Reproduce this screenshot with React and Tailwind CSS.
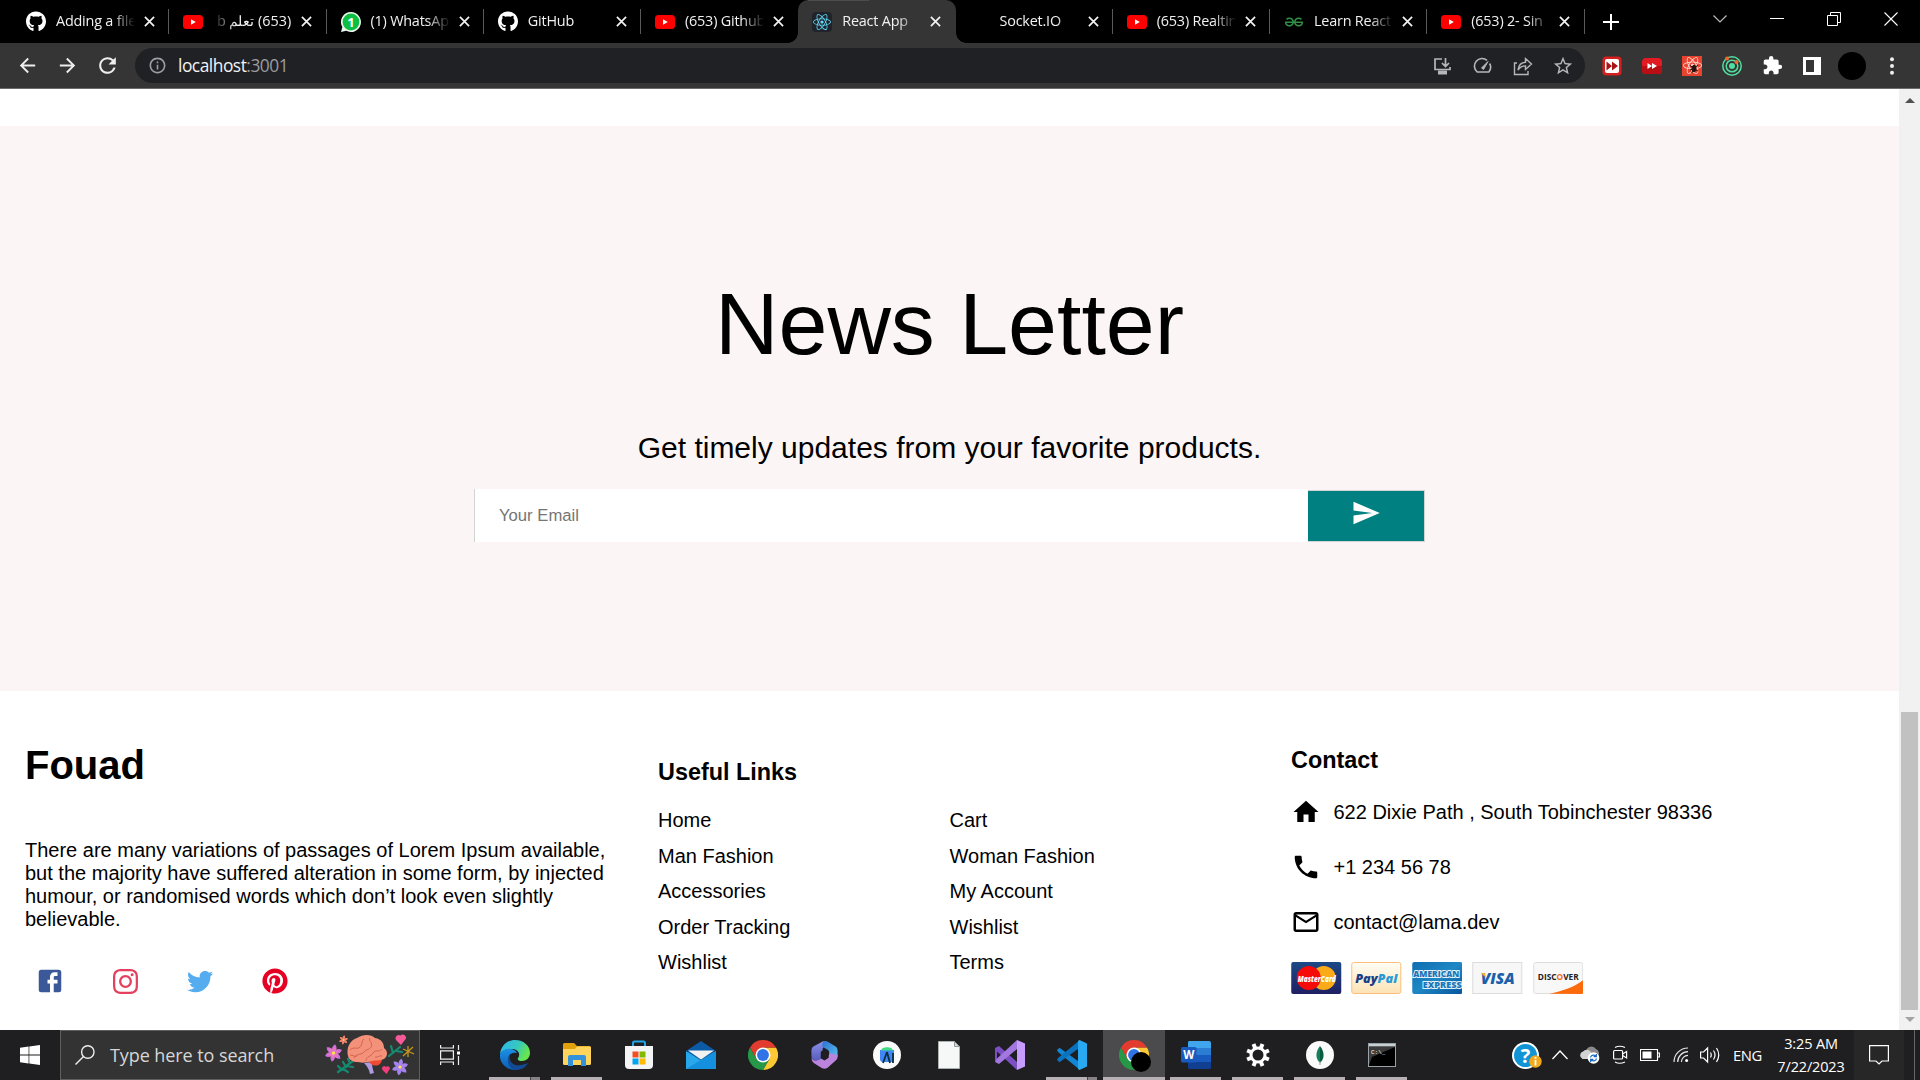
import { FaGithub, FaPinterest, FaReact } from "react-icons/fa";
import {
  MdArrowBack,
  MdArrowForward,
  MdExtension,
  MdHome,
  MdInfoOutline,
  MdMailOutline,
  MdPhone,
  MdRefresh,
  MdSend,
  MdStarBorder,
} from "react-icons/md";
import { SiGeeksforgeeks, SiInstagram } from "react-icons/si";

/* ---------- Browser tabs ---------- */

function YouTubeIcon() {
  return (
    <svg viewBox="0 0 20 20" className="size-5">
      <rect x="0" y="3" width="20" height="14" rx="3.5" fill="#f00" />
      <path d="M8 7.2v5.6l4.8-2.8z" fill="#fff" />
    </svg>
  );
}

function WhatsAppIcon() {
  return (
    <svg viewBox="0 0 20 20" className="size-5">
      <path d="M10 0a10 10 0 1 1-4.8 18.8L0 20l1.4-4.9A10 10 0 0 1 10 0z" fill="#e9f7ec" />
      <circle cx="10" cy="10" r="8.4" fill="#0cbf43" />
      <text x="10" y="14.8" textAnchor="middle" fontSize="13" fontWeight="700" fill="#fff" fontFamily="Open Sans">
        1
      </text>
    </svg>
  );
}

function ReactIcon() {
  return (
    <div className="flex size-5 items-center justify-center rounded-sm bg-[#20232a]">
      <FaReact className="size-[18px] text-[#61dafb]" />
    </div>
  );
}

const github = <FaGithub className="size-[21px] text-white" />;

const tabs = [
  { icon: github, title: "Adding a file" },
  { icon: <YouTubeIcon />, title: "(653) تعلم b", rtl: true },
  { icon: <WhatsAppIcon />, title: "(1) WhatsAp" },
  { icon: github, title: "GitHub" },
  { icon: <YouTubeIcon />, title: "(653) Github", noSep: true },
  { icon: <ReactIcon />, title: "React App", active: true },
  { icon: null, title: "Socket.IO" },
  { icon: <YouTubeIcon />, title: "(653) Realtin" },
  { icon: <SiGeeksforgeeks className="size-[18px] text-[#2f8d46]" />, title: "Learn React" },
  { icon: <YouTubeIcon />, title: "(653) 2- Sin" },
];

function Tab({ icon, title, active, rtl, noSep }) {
  return (
    <div
      className={
        "relative flex h-[43px] w-[157.25px] shrink-0 items-center pl-[14px] " +
        (active ? "rounded-t-[10px] bg-[#353535]" : "")
      }
    >
      {active && (
        <>
          <span className="absolute bottom-0 -left-[10px] size-[10px] bg-[radial-gradient(circle_at_0_0,#000_9.5px,#353535_10px)]" />
          <span className="absolute -right-[10px] bottom-0 size-[10px] bg-[radial-gradient(circle_at_100%_0,#000_9.5px,#353535_10px)]" />
          <span className="absolute top-0 left-[10px] h-px w-[61px] bg-[#4c4c4c]" />
        </>
      )}
      <span className="flex size-5 items-center justify-center">{icon}</span>
      <span
        dir={rtl ? "rtl" : "ltr"}
        className={
          "mb-[2px] ml-[10px] w-[78px] overflow-hidden text-[14.4px] leading-6 tracking-[-0.2px] whitespace-nowrap text-[#f1f1f1] " +
          (rtl
            ? "[mask-image:linear-gradient(to_left,#000_70%,transparent)]"
            : "[mask-image:linear-gradient(to_right,#000_72%,transparent_102%)]")
        }
      >
        {title}
      </span>
      <svg viewBox="0 0 12 12" className="ml-[10px] size-[11px]" stroke="#f1f1f1" strokeWidth="1.9">
        <path d="M1 1l10 10M11 1L1 11" />
      </svg>
      {!active && !noSep && <span className="absolute right-0 h-[25px] w-px bg-[#5a5a5a]" />}
    </div>
  );
}

function TabStrip() {
  return (
    <div className="flex h-[43px] items-center bg-black pl-[12px]">
      {tabs.map((t, i) => (
        <Tab key={i} {...t} />
      ))}
      <svg viewBox="0 0 16 16" className="ml-[18.5px] size-4" stroke="#fff" strokeWidth="2">
        <path d="M8 0v16M0 8h16" />
      </svg>
      <div className="ml-auto flex h-full items-start pt-3 text-white">
        <svg viewBox="0 0 14 14" className="mr-[43px] size-[14px]" fill="none" stroke="#bbb" strokeWidth="1.2">
          <path d="M.5 3.5L7 10l6.5-6.5" />
        </svg>
        <svg viewBox="0 0 14 14" className="mr-[43px] size-[14px]" fill="none" stroke="#fff" strokeWidth="1">
          <path d="M0 6.5h14" />
        </svg>
        <svg viewBox="0 0 14 14" className="mr-[43px] size-[14px]" fill="none" stroke="#fff" strokeWidth="1">
          <path d="M.5 3.5h10v10H.5zM3.5 3.5v-3h10v10h-3" />
        </svg>
        <svg viewBox="0 0 14 14" className="mr-[22px] size-[14px]" fill="none" stroke="#fff" strokeWidth="1.1">
          <path d="M.5.5l13 13M13.5.5l-13 13" />
        </svg>
      </div>
    </div>
  );
}

/* ---------- Browser toolbar ---------- */

function Slot({ children }) {
  return <span className="flex w-10 shrink-0 items-center justify-center">{children}</span>;
}

function Toolbar() {
  return (
    <div className="flex h-[46px] items-center border-b border-[#6b6b6b] bg-[#353535] pl-[7px]">
      <Slot>
        <MdArrowBack className="size-[23px] text-[#eee]" />
      </Slot>
      <Slot>
        <MdArrowForward className="size-[23px] text-[#eee]" />
      </Slot>
      <Slot>
        <MdRefresh className="size-[25px] text-[#eee]" />
      </Slot>
      <div className="ml-2 flex h-[35px] w-[1450px] items-center rounded-full bg-[#202124] pl-[13px]">
        <MdInfoOutline className="size-[19px] text-[#9aa0a6]" />
        <span className="ml-[11px] text-[17.4px] tracking-[-0.5px] text-[#9a9ca0]">
          <span className="text-[#f1f3f4]">localhost</span>:3001
        </span>
        <div className="ml-auto flex pr-[2px] text-[#b5b7ba]">
          <Slot>
            <svg viewBox="0 0 20 20" className="size-5" fill="none" stroke="currentColor" strokeWidth="1.7">
              <path d="M9 3H2v10.500h15V11M12.500 2v8M9 7l3.500 3.500L16 7" />
              <path d="M5 16.500h9" strokeWidth="4" />
            </svg>
          </Slot>
          <Slot>
            <svg viewBox="0 0 20 20" className="size-5" fill="none" stroke="currentColor" strokeWidth="1.6">
              <path d="M14 4.300A7.500 7.500 0 0 0 4.200 16h11.600a7.500 7.500 0 0 0 .800-8.500" />
              <path d="M8.500 12L15 5.500l-4.500 8z" fill="currentColor" strokeWidth="1" />
            </svg>
          </Slot>
          <Slot>
            <svg viewBox="0 0 20 20" className="size-5" fill="none" stroke="currentColor" strokeWidth="1.4">
              <path d="M4 7H1.500v11.500h13.500V15" />
              <path d="M5 14c.500-4.500 3-7.500 7.500-7.800V2.500L18.500 8l-6 5.500v-3.600C9.500 9.900 7 11 5 14z" />
            </svg>
          </Slot>
          <Slot>
            <MdStarBorder className="size-[22px]" />
          </Slot>
        </div>
      </div>
      <div className="ml-[7px] flex items-center">
        <Slot>
          <svg viewBox="0 0 20 20" className="size-5">
            <rect x=".5" y=".5" width="19" height="19" rx="3.500" fill="#d5201f" />
            <rect x="3" y="3" width="14" height="14" rx="2" fill="#fff" />
            <path d="M4.500 5.500L10 10l-5.500 4.500zM10 5.500l6 4.500-6 4.500z" fill="#a91515" />
          </svg>
        </Slot>
        <Slot>
          <svg viewBox="0 0 20 20" className="size-5">
            <rect x="0" y="2" width="20" height="16" rx="4" fill="#e21b22" />
            <path d="M0 10h20v4a4 4 0 0 1-4 4H4a4 4 0 0 1-4-4z" fill="#b90e14" />
            <path d="M5.500 7l4.500 3-4.500 3zM10 7l5 3-5 3z" fill="#fff" />
          </svg>
        </Slot>
        <Slot>
          <span className="relative flex size-5 items-center justify-center bg-[#e8432f]">
            <FaReact className="size-[19px] text-[#ffd9d2]" />
            <svg viewBox="0 0 20 20" className="absolute inset-0 size-5" stroke="#241512" strokeWidth="1">
              <ellipse cx="12" cy="12.500" rx="2" ry="3.200" fill="#241512" />
              <path d="M8 9.500l3 2M16 9l-3 2.500M8 14l3-1M16 15l-3-1.500M9.500 17l1.500-2" />
            </svg>
          </span>
        </Slot>
        <Slot>
          <svg viewBox="0 0 20 20" className="size-5" fill="none" stroke="#4fe0a0" strokeWidth="1.500">
            <circle cx="10" cy="10" r="9.200" />
            <circle cx="10" cy="10" r="5.800" />
            <circle cx="10" cy="10" r="3" fill="#4fe0a0" stroke="none" />
            <circle cx="5" cy="2.500" r="2" fill="#f2662b" stroke="none" />
            <circle cx="14.500" cy="6" r="2" fill="#f2662b" stroke="none" />
          </svg>
        </Slot>
        <Slot>
          <MdExtension className="size-[21px] text-white" />
        </Slot>
        <Slot>
          <svg viewBox="0 0 18 18" className="size-[18px]">
            <path d="M0 0h18v18H0zM3 3v12h8V3z" fill="#fff" fillRule="evenodd" />
          </svg>
        </Slot>
        <Slot>
          <span className="size-7 rounded-full bg-black" />
        </Slot>
        <Slot>
          <svg viewBox="0 0 4 18" className="h-[18px] w-1" fill="#eee">
            <circle cx="2" cy="2.300" r="2" />
            <circle cx="2" cy="9" r="2" />
            <circle cx="2" cy="15.700" r="2" />
          </svg>
        </Slot>
      </div>
    </div>
  );
}

/* ---------- Web page ---------- */

function Newsletter() {
  return (
    <section className="flex h-[565px] flex-col items-center bg-[#fcf5f5] pt-[148px]">
      <h1 className="h-[100px] text-[87.9px] leading-[100px]">News Letter</h1>
      <p className="mt-[57px] text-[30px] leading-[34px]">Get timely updates from your favorite products.</p>
      <div className="mt-[24px] flex h-[53px] w-[951px] border-l border-[#d3d3d3]">
        <div className="flex flex-1 items-center bg-white pl-6 text-[16.67px] text-[#757575]">Your Email</div>
        <div className="mt-px flex w-[117px] justify-center border-t border-r border-b border-[#d3d3d3] bg-[#008080] pt-[7px]">
          <MdSend className="size-[30px] text-white" />
        </div>
      </div>
    </section>
  );
}

function Facebook() {
  return (
    <svg viewBox="0 0 24 24" className="size-[30px]" fill="#3b5999">
      <path d="M5 3h14a2 2 0 0 1 2 2v14a2 2 0 0 1-2 2H5a2 2 0 0 1-2-2V5a2 2 0 0 1 2-2m13 2h-2.500A3.500 3.500 0 0 0 12 8.500V11h-2v3h2v7h3v-7h3v-3h-3V9a1 1 0 0 1 1-1h2V5z" />
    </svg>
  );
}

function Twitter() {
  return (
    <svg viewBox="0 0 24 24" className="size-[30px]" fill="#55acee">
      <path d="M22.46 6c-.77.35-1.600.58-2.460.69.88-.53 1.560-1.370 1.880-2.380-.83.5-1.750.85-2.720 1.050C18.370 4.500 17.260 4 16 4c-2.350 0-4.270 1.920-4.270 4.290 0 .34.04.67.11.98C8.280 9.090 5.110 7.380 3 4.790c-.37.63-.58 1.370-.58 2.150 0 1.490.75 2.810 1.910 3.560-.71 0-1.370-.2-1.950-.5v.03c0 2.080 1.480 3.820 3.440 4.210a4.220 4.220 0 0 1-1.930.07 4.280 4.280 0 0 0 4 2.980 8.521 8.521 0 0 1-5.330 1.840c-.34 0-.68-.02-1.020-.06C3.440 20.290 5.700 21 8.120 21 16 21 20.330 14.460 20.330 8.790c0-.19 0-.37-.01-.56.84-.6 1.560-1.360 2.140-2.230z" />
    </svg>
  );
}

const linkRows = [
  ["Home", "Cart"],
  ["Man Fashion", "Woman Fashion"],
  ["Accessories", "My Account"],
  ["Order Tracking", "Wishlist"],
  ["Wishlist", "Terms"],
];

function Cards() {
  const card = "h-8 w-[50.5px]";
  return (
    <div className="mt-[25px] flex gap-[9.9px] font-['Open_Sans']">
      <svg viewBox="0 0 50 32" className={card}>
        <defs>
          <linearGradient id="mc" x1="0" y1="0" x2="0" y2="1">
            <stop offset="0" stopColor="#1b4a86" />
            <stop offset="1" stopColor="#1f2062" />
          </linearGradient>
        </defs>
        <rect width="50" height="32" rx="2" fill="url(#mc)" />
        <circle cx="32.500" cy="16" r="12" fill="#fbab18" />
        <circle cx="17.500" cy="16" r="12" fill="#f60b0b" />
        <text x="25.500" y="19.800" textAnchor="middle" textLength="38" lengthAdjust="spacingAndGlyphs" fontSize="9.500" fontWeight="800" fontStyle="italic" fill="#fff">
          MasterCard
        </text>
      </svg>
      <svg viewBox="0 0 50 32" className={card}>
        <defs>
          <linearGradient id="pp" x1="0" y1="0" x2="0" y2="1">
            <stop offset="0" stopColor="#fffdf6" />
            <stop offset="1" stopColor="#fde3b4" />
          </linearGradient>
        </defs>
        <rect x=".5" y=".5" width="49" height="31" rx="2" fill="url(#pp)" stroke="#fbbf7b" />
        <text x="25" y="20.500" textAnchor="middle" textLength="42" lengthAdjust="spacingAndGlyphs" fontSize="12.500" fontWeight="800" fontStyle="italic" fill="#183f87">
          Pay<tspan fill="#2a9ad6">Pal</tspan>
        </text>
      </svg>
      <svg viewBox="0 0 50 32" className={card}>
        <defs>
          <linearGradient id="ae" x1="0" y1="0" x2="1" y2="1">
            <stop offset="0" stopColor="#0d6db0" />
            <stop offset=".5" stopColor="#1f87c4" />
            <stop offset="1" stopColor="#07559b" />
          </linearGradient>
        </defs>
        <rect width="50" height="32" rx="2" fill="url(#ae)" />
        <g fontSize="9.500" fontWeight="800" fill="#1b74b4" stroke="#e4f2fb" strokeWidth="2" paintOrder="stroke">
          <text x="1" y="15.300" textLength="46" lengthAdjust="spacingAndGlyphs">AMERICAN</text>
          <text x="10.500" y="25.800" textLength="39" lengthAdjust="spacingAndGlyphs">EXPRESS</text>
        </g>
      </svg>
      <svg viewBox="0 0 50 32" className={card}>
        <rect x=".5" y=".5" width="49" height="31" fill="#f7f7f8" stroke="#dcdcde" />
        <text x="25.500" y="22" textAnchor="middle" textLength="34" lengthAdjust="spacingAndGlyphs" fontSize="15" fontWeight="800" fontStyle="italic" fill="#1c5fa9">
          VISA
        </text>
        <path d="M8.500 11h4l1 4.500z" fill="#f5b120" />
      </svg>
      <svg viewBox="0 0 50 32" className={card}>
        <rect x=".5" y=".5" width="49" height="31" rx="2" fill="#f8f8f8" stroke="#dedede" />
        <path d="M16 31.800C29 29 42 24.500 50 18v12a2 2 0 0 1-2 2z" fill="#fb6a0c" />
        <text x="25" y="17.500" textAnchor="middle" textLength="41" lengthAdjust="spacingAndGlyphs" fontSize="9" fontWeight="700" fill="#222">
          DISC<tspan fill="#f76a10">O</tspan>VER
        </text>
      </svg>
    </div>
  );
}

function Footer() {
  return (
    <footer className="flex h-[339px] bg-white text-[20px] leading-[23px]">
      <div className="w-[633px] px-[25px] pt-[51px]">
        <h1 className="text-[40px] leading-[46px] font-bold">Fouad</h1>
        <p className="mt-[51px] w-[583px]">
          There are many variations of passages of Lorem Ipsum available, but the majority have suffered alteration in
          some form, by injected humour, or randomised words which don’t look even slightly believable.
        </p>
        <div className="mt-[25px] flex gap-[25px]">
          <span className="flex size-[50px] items-center justify-center">
            <Facebook />
          </span>
          <span className="flex size-[50px] items-center justify-center">
            <SiInstagram className="size-[25px] text-[#e4405f]" />
          </span>
          <span className="flex size-[50px] items-center justify-center">
            <Twitter />
          </span>
          <span className="flex size-[50px] items-center justify-center">
            <FaPinterest className="size-[26px] text-[#e60023]" />
          </span>
        </div>
      </div>
      <div className="w-[633px] px-[25px] pt-[68px]">
        <h3 className="text-[23.4px] leading-[27px] font-bold">Useful Links</h3>
        <div className="mt-[23px] grid grid-cols-[291.5px_1fr] gap-y-[12.5px]">
          {linkRows.flat().map((l, i) => (
            <span key={i}>{l}</span>
          ))}
        </div>
      </div>
      <div className="flex-1 px-[25px] pt-[56px]">
        <h3 className="text-[23.4px] leading-[27px] font-bold">Contact</h3>
        <div className="mt-[23px] flex flex-col gap-[25px]">
          <div className="flex h-[30px] items-center gap-[12.5px]">
            <MdHome className="size-[30px]" />
            622 Dixie Path , South Tobinchester 98336
          </div>
          <div className="flex h-[30px] items-center gap-[12.5px]">
            <MdPhone className="size-[30px]" />
            +1 234 56 78
          </div>
          <div className="flex h-[30px] items-center gap-[12.5px]">
            <MdMailOutline className="size-[30px]" />
            contact@lama.dev
          </div>
        </div>
        <Cards />
      </div>
    </footer>
  );
}

function Scrollbar() {
  return (
    <div className="flex w-[21px] flex-col items-center bg-[#f1f1f1]">
      <svg viewBox="0 0 10 5" className="mt-[9px] h-[5px] w-[10px]">
        <path d="M0 5l5-5 5 5z" fill="#505050" />
      </svg>
      <div className="mt-[609px] h-[298px] w-[17px] bg-[#c1c1c1]" />
      <svg viewBox="0 0 10 5" className="mt-[7px] h-[5px] w-[10px]">
        <path d="M0 0l5 5 5-5z" fill="#a3a3a3" />
      </svg>
    </div>
  );
}

/* ---------- Taskbar icons ---------- */

function Flower({ x, y, s, petal, core }) {
  return (
    <g transform={`translate(${x} ${y}) scale(${s})`}>
      {[0, 60, 120, 180, 240, 300].map((a) => (
        <path key={a} d="M0-10.500C3-8 3.400-5 1.500-1h-3C-3.400-5-3-8 0-10.500z" fill={petal} transform={`rotate(${a + 10})`} />
      ))}
      <circle r="3" fill={petal} />
      <circle r="2" fill={core} />
    </g>
  );
}

function Brain() {
  return (
    <svg viewBox="0 0 92 42" className="h-[42px] w-[92px]">
      <defs>
        <linearGradient id="petals" x1="0" y1="0" x2="0" y2="1">
          <stop offset="0" stopColor="#c46be8" />
          <stop offset="1" stopColor="#f27bb4" />
        </linearGradient>
      </defs>
      <Flower x={8.5} y={19} s={0.85} petal="url(#petals)" core="#ffe34d" />
      <Flower x={18.5} y={6} s={0.45} petal="#f4846a" core="#ffd34d" />
      <Flower x={75} y={33} s={0.8} petal="#a583ee" core="#ffe34d" />
      <path d="M13 38l15-11M17 36l-4-4M21 33l-3-5M25 29l-2-4M18 35l5 3M22 32l6 1" stroke="#158a70" strokeWidth="2.200" strokeLinecap="round" />
      <path d="M64 22l11-9M68 19l-2-7M71 17l6 1" stroke="#158a70" strokeWidth="2.200" strokeLinecap="round" />
      <path d="M83 12v11M78 15l11 5M88 13l-10 9" stroke="#c8961e" strokeWidth="1.300" />
      <path d="M76 11l-5-5a3.300 3.300 0 0 1 4.500-4.500 3.300 3.300 0 0 1 5.500 3z" fill="#f65a9a" />
      <path d="M61.500 40l-4-4a2.200 2.200 0 0 1 3.500-3 2.200 2.200 0 0 1 3.800 2z" fill="#f0407c" />
      <path d="M39 29l8-1c0 5 1 8 2 11l-4 1c-1-5-3-8-6-11z" fill="#b09be0" />
      <path d="M44 28c5 6 12 4 13-2l-5-3z" fill="#f04a30" />
      <path d="M23 22c-2-8 2-16 9-18 6-4 14-4 18 0 7 1 9 6 9 10 4 3 4 8 0 11-4 2-9 1-12 2-6 2-12 2-14 1-5 0-9-2-10-6z" fill="#f3917a" />
      <path d="M25 16c4-4 7 0 10-3s1-6 4-8M29 24c3-5 8-3 10-6s7-2 8-7M41 27c0-5 5-4 7-8s6 0 9-4M45 4c-2 3 3 4 1 7M25 21c3 0 4 2 7 1M50 23c3 1 4-2 7-1" fill="none" stroke="#d0604a" strokeWidth=".9" />
    </svg>
  );
}

function Edge() {
  return (
    <svg viewBox="0 0 30 30" className="size-[30px]">
      <defs>
        <linearGradient id="eg1" x1="0" y1="0" x2="1" y2=".4">
          <stop offset="0" stopColor="#2db4ee" />
          <stop offset=".6" stopColor="#36c8c0" />
          <stop offset="1" stopColor="#66e64e" />
        </linearGradient>
        <linearGradient id="eg2" x1="0" y1="0" x2="0" y2="1">
          <stop offset="0" stopColor="#1b92e6" />
          <stop offset="1" stopColor="#0b5cb4" />
        </linearGradient>
      </defs>
      <path d="M0 14C1 6 7 0 15 0c9 0 15 6 15 13 0 5-4 8-8 8-3 0-5-1-4-3 3-4 0-9-6-9C6 9 2 11 0 14z" fill="url(#eg1)" />
      <path d="M0 14c2-4 7-6 11-5 3 .5 5 2 6 4-7-1-10 4-8 9 2 5 6 7 8 8C8 31-1 24 0 14z" fill="url(#eg2)" />
      <path d="M11 13c-4 7 2 14 10 12 3-.5 5-1.500 7-2-3 5-7 7-12 7C8 29 5 18 11 13z" fill="#134a93" />
    </svg>
  );
}

function Explorer() {
  return (
    <svg viewBox="0 0 28 24" className="h-6 w-7">
      <path d="M0 1.500Q0 0 1.500 0H11l3 3h12.500Q28 3 28 4.500V10H0z" fill="#e2a10c" />
      <path d="M0 6h12l2-2.500h12.500q1.500 0 1.500 1.500v15.500q0 1.500-1.500 1.500h-25Q0 22 0 20.500z" fill="#ffd45c" />
      <path d="M5 23V14q0-2 2-2h14q2 0 2 2v9h-5v-6h-8v6z" fill="#3292dc" />
    </svg>
  );
}

function Store() {
  return (
    <svg viewBox="0 0 30 30" className="size-[30px]">
      <path d="M9 8V3q0-1.500 1.500-1.500h9Q21 1.500 21 3v5" fill="none" stroke="#1fa5e8" strokeWidth="2" />
      <path d="M1 6h28v19q0 4-4 4H5q-4 0-4-4z" fill="#f3f4f6" />
      <path d="M8.500 11.500h6v6h-6z" fill="#f25022" />
      <path d="M15.500 11.500h6v6h-6z" fill="#7fba00" />
      <path d="M8.500 18.500h6v6h-6z" fill="#00a4ef" />
      <path d="M15.500 18.500h6v6h-6z" fill="#ffb900" />
    </svg>
  );
}

function Mail() {
  return (
    <svg viewBox="0 0 30 28" className="h-7 w-[30px]">
      <path d="M0 10L15 0l15 10z" fill="#0c59a4" />
      <path d="M2 9h26v10H2z" fill="#0c59a4" />
      <path d="M0 10l15 9.500L30 10v18H0z" fill="#28a8ea" />
      <path d="M0 28L30 10v18z" fill="#1490df" />
      <path d="M2 9.500h26l-13 9z" fill="#f2f2f2" />
    </svg>
  );
}

function Chrome() {
  return (
    <svg viewBox="0 0 48 48" className="size-[30px]">
      <path d="M24 12h20.800A24 24 0 0 1 24 48l10.400-18z" fill="#fcc934" />
      <path d="M24 48A24 24 0 0 1 3.200 12l10.400 18L24 36l5 3.300z" fill="#279847" />
      <path d="M34.400 30L24 48 13.600 30z" fill="#279847" />
      <path d="M3.200 12A24 24 0 0 1 44.800 12H24L13.600 30z" fill="#e33b2e" />
      <circle cx="24" cy="24" r="12" fill="#fff" />
      <circle cx="24" cy="24" r="9.500" fill="#2f73e6" />
    </svg>
  );
}

function M365() {
  return (
    <svg viewBox="0 0 28 30" className="h-[28px] w-[27px]">
      <defs>
        <linearGradient id="m3" x1="0" y1="0" x2="0" y2="1">
          <stop offset="0" stopColor="#8b90e8" />
          <stop offset="1" stopColor="#4e55b5" />
        </linearGradient>
        <linearGradient id="m4" x1="0" y1="0" x2="1" y2="1">
          <stop offset="0" stopColor="#2b6fd0" />
          <stop offset="1" stopColor="#5cc8f2" />
        </linearGradient>
      </defs>
      <path d="M10 1.500C12 0 15 0 17 1l-5 7v9l-2 7-8-4Q0 19 0 16V10q0-3 2-4z" fill="url(#m3)" />
      <path d="M14 0q2 0 4 1.200l7.500 4.500Q28 7 28 10v7l-9 3V12q0-2-2-3l-5-2.500C11 4 12 1 14 0z" fill="url(#m4)" />
      <path d="M28 15v2q0 3-2 4l-9 8q-3 1.500-6 0L2.500 23.500Q0 22 0 18q2 4 6 3l11-4 3-4z" fill="#ba84dc" />
      <path d="M10 11.500L13.500 9l5 3v6L14 21l-4-2.500z" fill="#1f1e20" />
    </svg>
  );
}

function AndroidStudio() {
  return (
    <svg viewBox="0 0 28 28" className="size-7">
      <circle cx="14" cy="14" r="14" fill="#fafafa" />
      <path d="M7 9h14v9q0 3-3 3H10q-3 0-3-3z" fill="#4285f4" />
      <path d="M8 9.500C8.500 5 19.500 5 20 9.500z" fill="#3ddc84" />
      <path d="M14 11l-4 11M14 11l3 11M20 12v10" stroke="#073042" strokeWidth="1.800" />
    </svg>
  );
}

function FileIcon() {
  return (
    <svg viewBox="0 0 22 28" className="h-7 w-[22px]">
      <path d="M.5.500h16l5 5v22H.500z" fill="#f6f8f8" stroke="#aab2b0" />
      <path d="M16.500.500v5h5z" fill="#d5dad9" stroke="#8d9694" />
    </svg>
  );
}

function VisualStudio() {
  return (
    <svg viewBox="0 0 30 30" className="size-[30px]">
      <path d="M0 8l4-2 18 16v8L2 11.500v8L0 22z" fill="#7d4fc4" />
      <path d="M0 22l4 2L22 9V0L2 18.500z" fill="#a277e0" />
      <path d="M22 0l8 3.500v23L22 30z" fill="#c79bff" />
    </svg>
  );
}

function VSCode() {
  return (
    <svg viewBox="0 0 30 30" className="size-[30px]">
      <path d="M0 10l2.500-2.300L23 22.500V30L1 12z" fill="#1286d2" />
      <path d="M0 20l2.500 2.300L23 7.500V0L1 18z" fill="#0b73bd" />
      <path d="M22.500 0l7.500 3.500v23L22.500 30l-1.500-1V1z" fill="#29a9f2" />
    </svg>
  );
}

function Word() {
  return (
    <svg viewBox="0 0 30 28" className="h-7 w-[30px]">
      <path d="M8 0h20q2 0 2 1.500V7H7V1.500Q7 0 8 0z" fill="#41a5ee" />
      <path d="M7 7h23v7H7z" fill="#2b7cd3" />
      <path d="M7 14h23v7H7z" fill="#185abd" />
      <path d="M7 21h23v5.500q0 1.500-2 1.500H9q-2 0-2-1.500z" fill="#103f91" />
      <rect x="0" y="6" width="15.500" height="15.500" rx="1.500" fill="#185abd" />
      <text x="7.700" y="18" textAnchor="middle" fontSize="11.500" fontWeight="700" fill="#fff" fontFamily="Open Sans">
        W
      </text>
    </svg>
  );
}

function Gear() {
  return (
    <svg viewBox="-12 -12 24 24" className="size-6">
      {[0, 45, 90, 135, 180, 225, 270, 315].map((a) => (
        <rect key={a} x="-2" y="-11.800" width="4" height="5" fill="#fff" transform={`rotate(${a + 22.5})`} />
      ))}
      <circle r="7" fill="none" stroke="#fff" strokeWidth="3" />
    </svg>
  );
}

function Mongo() {
  return (
    <svg viewBox="0 0 28 28" className="size-7">
      <circle cx="14" cy="14" r="14" fill="#fafafa" />
      <path d="M14 5c5 6 4.500 13 0 17z" fill="#0a5b40" />
      <path d="M14 5C9 11 9.500 18 14 22z" fill="#12805a" />
      <path d="M14 20v4" stroke="#8ba69b" />
    </svg>
  );
}

function Cmd() {
  return (
    <svg viewBox="0 0 28 24" className="h-6 w-7">
      <rect x=".5" y=".5" width="27" height="23" fill="#000" stroke="#99a2a6" />
      <path d="M1 1h26v2.500H1z" fill="#c7cfd3" />
      <path d="M1 4h26L4 14l-3 8z" fill="#3b3b3b" />
      <text x="3" y="10.500" fontSize="6" fill="#fff" fontFamily="Liberation Mono">
        C:\_
      </text>
    </svg>
  );
}

const apps = [
  { icon: <Edge />, line: "split" },
  { icon: <Explorer />, line: "plain" },
  { icon: <Store /> },
  { icon: <Mail /> },
  { icon: <Chrome /> },
  { icon: <M365 /> },
  { icon: <AndroidStudio /> },
  { icon: <FileIcon /> },
  { icon: <VisualStudio /> },
  { icon: <VSCode />, line: "split" },
  { icon: <Chrome />, line: "active" },
  { icon: <Word />, line: "plain" },
  { icon: <Gear />, line: "plain" },
  { icon: <Mongo />, line: "plain" },
  { icon: <Cmd />, line: "plain" },
];

function AppButton({ icon, line }) {
  return (
    <div className={"relative flex h-full w-[61.95px] shrink-0 items-center justify-center " + (line === "active" ? "bg-[#4b4a4c]" : "")}>
      {icon}
      {line === "active" && (
        <>
          <span className="absolute top-[22px] left-[28px] size-5 rounded-full bg-black" />
          <span className="absolute inset-x-0 bottom-0 h-[3px] bg-[#b6b0b4]" />
        </>
      )}
      {line === "plain" && <span className="absolute bottom-0 left-[5px] h-[3px] w-[51px] bg-[#b6b0b4]" />}
      {line === "split" && (
        <span className="absolute bottom-0 left-[5px] flex h-[3px] w-[51px] bg-[#b6b0b4]">
          <span className="ml-auto w-[10px] border-l border-[#444] bg-[#858184]" />
        </span>
      )}
    </div>
  );
}

function Tray() {
  return (
    <div className="ml-auto flex h-full items-center text-white">
      <svg viewBox="0 0 30 28" className="mt-[2px] h-7 w-[30px]">
        <circle cx="13.500" cy="13.500" r="13.500" fill="#fff" />
        <circle cx="13.500" cy="13.500" r="11.500" fill="#1094d6" />
        <text x="13.500" y="21" textAnchor="middle" fontSize="20" fontWeight="700" fill="#fff">
          ?
        </text>
        <circle cx="23.500" cy="19.500" r="6.200" fill="#f2a91c" />
        <path d="M23.500 18v5.500M23.500 15v1.800" stroke="#fff" strokeWidth="1.800" />
      </svg>
      <svg viewBox="0 0 16 10" className="ml-[10px] h-[10px] w-4" fill="none" stroke="#fff" strokeWidth="1.300">
        <path d="M.5 9L8 1l7.500 8" />
      </svg>
      <svg viewBox="0 0 21 18" className="ml-[11px] h-[18px] w-[21px]">
        <path d="M7 5a5.500 5.500 0 0 1 10-2 4.500 4.500 0 0 1 1 8H8z" fill="#8a8a8a" />
        <path d="M3.500 13a4 4 0 0 1 .500-7.500A5 5 0 0 1 12 6l3 7z" fill="#d2d2d2" />
        <circle cx="14.500" cy="12" r="5.800" fill="#fff" />
        <path d="M11.500 11.500a3 3 0 0 1 5.500-1M17.500 12.500a3 3 0 0 1-5.500 1M17.300 8v2.700h-2.700M11.700 16v-2.700h2.700" fill="none" stroke="#1869c0" strokeWidth="1.300" />
      </svg>
      <svg viewBox="0 0 15 20" className="ml-[13px] h-5 w-[15px]" fill="none" stroke="#fff" strokeWidth="1.200">
        <rect x=".6" y="5.500" width="9" height="8.500" rx="1" />
        <path d="M9.600 9l4-2.500v6.500l-4-2.500M2 2.500q4.500-2.500 10 0M2 17q4.500 2.500 10 0" />
      </svg>
      <svg viewBox="0 0 20 12" className="ml-3 h-3 w-5" fill="none" stroke="#fff" strokeWidth="1.100">
        <path d="M.5.500h17v11H.500zM18 4h1.400v4H18" />
        <path d="M2.500 2.500h9v7h-9z" fill="#fff" stroke="none" />
      </svg>
      <svg viewBox="0 0 16 16" className="ml-[13px] size-4" fill="none" stroke="#e8e8e8" strokeWidth="1.200">
        <path d="M1 15A14 14 0 0 1 15 1M4.700 15A10.300 10.300 0 0 1 15 4.700M8.400 15A6.600 6.600 0 0 1 15 8.400" />
        <circle cx="13.600" cy="13.600" r="1.500" fill="#fff" stroke="none" />
      </svg>
      <svg viewBox="0 0 21 18" className="ml-[11px] h-[18px] w-[21px]" fill="none" stroke="#fff" strokeWidth="1.200">
        <path d="M.6 6v6h3l4 4V2l-4 4zM10.500 6.500q1.500 2.500 0 5M13.500 4.500q3 4.500 0 9M16.500 2q4.500 7 0 14" />
      </svg>
      <span className="ml-3 w-7 text-[14.8px] tracking-[-0.4px]">ENG</span>
      <span className="ml-[10px] w-20 text-center text-[14.5px] leading-[23px] tracking-[-0.15px] whitespace-nowrap">
        3:25 AM
        <br />
        7/22/2023
      </span>
      <div className="ml-[3px] flex h-full w-[50px] items-center justify-center bg-[#272727]">
        <svg viewBox="0 0 20 20" className="size-5" fill="none" stroke="#fff" strokeWidth="1.200">
          <path d="M.6.600h18.800v15.400h-6.400l-3 3-3-3H.600z" />
        </svg>
      </div>
      <span className="mr-[5px] ml-[10px] h-full w-px bg-[#666]" />
    </div>
  );
}

function Taskbar() {
  return (
    <div className="flex h-[50px] items-center bg-[#1f1e20]">
      <div className="flex w-[60px] justify-start pl-5">
        <svg viewBox="0 0 20 20" className="size-5" fill="#fff">
          <path d="M0 2.800L8.600 1.600v8H0zM9.300 1.500L20 0v9.600H9.300zM0 10.400h8.600v8L0 17.200zM9.300 10.400H20V20L9.300 18.500z" />
        </svg>
      </div>
      <div className="flex h-[50px] w-[360px] items-center border border-[#5f5f5f] bg-[#333]">
        <svg viewBox="0 0 20 20" className="ml-[14px] size-5" fill="none" stroke="#eee" strokeWidth="1.400">
          <circle cx="12.800" cy="7" r="6.200" />
          <path d="M8.500 11.500L.5 19.500" />
        </svg>
        <span className="ml-[15px] text-[18px] tracking-[-0.08px] text-[#d6d6d6]">Type here to search</span>
        <span className="mr-[2px] ml-auto">
          <Brain />
        </span>
      </div>
      <svg viewBox="0 0 20 20" className="mr-[24px] ml-5 size-5 shrink-0" fill="none" stroke="#eee" strokeWidth="1.200">
        <path d="M.6 0v3h12.800V0M.6 5.800h12.800v8.400H.600zM.6 20v-3h12.800v3M18.500 0v5M18.500 11v9" />
        <path d="M17 6.500h3v3h-3z" fill="#fff" stroke="none" />
      </svg>
      {apps.map((a, i) => (
        <AppButton key={i} {...a} />
      ))}
      <Tray />
    </div>
  );
}

export default function App() {
  return (
    <div className="flex h-[1080px] w-[1920px] flex-col overflow-hidden bg-white font-['Open_Sans',sans-serif]">
      <TabStrip />
      <Toolbar />
      <div className="flex h-[941px]">
        <main className="w-[1899px] pt-[37px] font-['Liberation_Sans',sans-serif] text-black">
          <Newsletter />
          <Footer />
        </main>
        <Scrollbar />
      </div>
      <Taskbar />
    </div>
  );
}
